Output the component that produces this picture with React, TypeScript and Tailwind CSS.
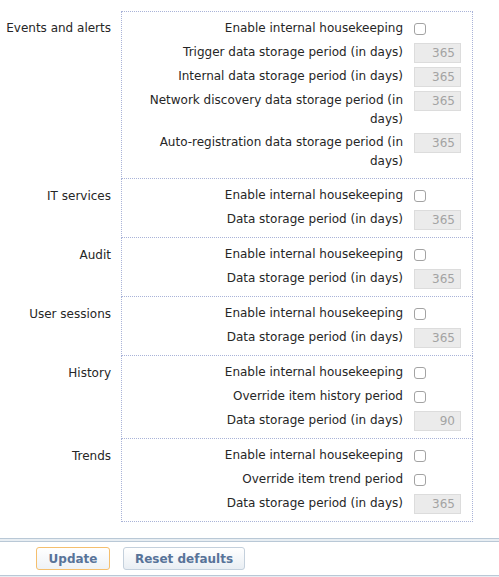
type Row = { label: string; kind: 'check' | 'input'; value?: string }

const SECTIONS: { title: string; rows: Row[] }[] = [
  {
    title: 'Events and alerts',
    rows: [
      { label: 'Enable internal housekeeping', kind: 'check' },
      { label: 'Trigger data storage period (in days)', kind: 'input', value: '365' },
      { label: 'Internal data storage period (in days)', kind: 'input', value: '365' },
      { label: 'Network discovery data storage period (in days)', kind: 'input', value: '365' },
      { label: 'Auto-registration data storage period (in days)', kind: 'input', value: '365' },
    ],
  },
  {
    title: 'IT services',
    rows: [
      { label: 'Enable internal housekeeping', kind: 'check' },
      { label: 'Data storage period (in days)', kind: 'input', value: '365' },
    ],
  },
  {
    title: 'Audit',
    rows: [
      { label: 'Enable internal housekeeping', kind: 'check' },
      { label: 'Data storage period (in days)', kind: 'input', value: '365' },
    ],
  },
  {
    title: 'User sessions',
    rows: [
      { label: 'Enable internal housekeeping', kind: 'check' },
      { label: 'Data storage period (in days)', kind: 'input', value: '365' },
    ],
  },
  {
    title: 'History',
    rows: [
      { label: 'Enable internal housekeeping', kind: 'check' },
      { label: 'Override item history period', kind: 'check' },
      { label: 'Data storage period (in days)', kind: 'input', value: '90' },
    ],
  },
  {
    title: 'Trends',
    rows: [
      { label: 'Enable internal housekeeping', kind: 'check' },
      { label: 'Override item trend period', kind: 'check' },
      { label: 'Data storage period (in days)', kind: 'input', value: '365' },
    ],
  },
]

export default function App() {
  return (
    <div
      className="min-h-[577px] w-[499px] bg-white text-[12px] text-[#262626]"
      style={{ fontFamily: '"DejaVu Sans", Verdana, sans-serif' }}
    >
      <div className="pt-[11px]">
        {SECTIONS.map((s, idx) => (
          <div key={s.title} className="flex">
            <div className="w-[111px] shrink-0 pt-[7px] text-right leading-[20px]">{s.title}</div>
            <div
              className={
                'ml-[10px] flex w-[352px] flex-col gap-1 border-x border-b border-dotted border-[#a9b3d8] pb-[7px] pr-[11px] pt-[7px] ' +
                (idx === 0 ? 'border-t' : '')
              }
            >
              {s.rows.map((r) => (
                <div key={r.label} className="flex min-h-[20px] items-start justify-end gap-[11px]">
                  <span className="max-w-[258px] text-right leading-[19px]">{r.label}</span>
                  <div className="flex h-[20px] w-[47px] shrink-0 items-center">
                    {r.kind === 'check' ? (
                      <span className="h-[12px] w-[12px] rounded-[3px] border border-[#a3a3a3] bg-white" />
                    ) : (
                      <div className="flex h-[20px] w-[47px] items-center justify-end border border-[#dcdcdc] bg-[#ebebeb] pr-[5px] text-[#a3a3a3]">
                        {r.value}
                      </div>
                    )}
                  </div>
                </div>
              ))}
            </div>
          </div>
        ))}
      </div>

      <footer className="mt-[16px]">
        <div className="h-[4px] border-y border-[#b9c8d6] bg-[#e8eef3]" />
        <div className="flex gap-[13px] py-[5px] pl-[36px]">
          <button className="h-[23px] w-[74px] rounded-[3px] border border-[#f5bf6e] bg-gradient-to-b from-white to-[#eef2f6] font-bold text-[#587399]">
            Update
          </button>
          <button className="h-[23px] w-[122px] rounded-[3px] border border-[#c4d0dc] bg-gradient-to-b from-white to-[#e9eef3] font-bold text-[#587399]">
            Reset defaults
          </button>
        </div>
        <div className="h-[4px] border-t border-[#b9c8d6] bg-[#e8eef3]" />
      </footer>
    </div>
  )
}
